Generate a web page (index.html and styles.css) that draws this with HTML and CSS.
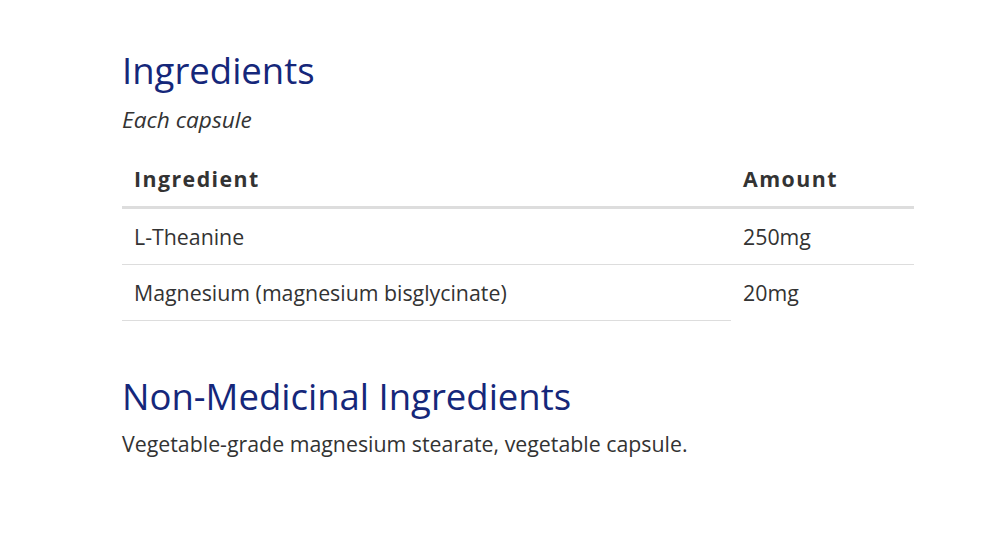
FILE: index.html
```html
<!DOCTYPE html>
<html lang="en">
<head>
  <meta charset="UTF-8" />
  <title>Ingredients</title>
  <link rel="stylesheet" href="styles.css">
</head>
<body>
  <div class="content">

    <!-- Ingredients -->
    <h2>Ingredients</h2>
    <p class="note">Each capsule</p>
    <table class="ingredients">
      <thead>
        <tr>
          <th>Ingredient</th>
          <th class="amount">Amount</th>
        </tr>
      </thead>
      <tbody>
        <tr>
          <td>L-Theanine</td>
          <td class="amount">250mg</td>
        </tr>
        <tr class="last">
          <td>Magnesium (magnesium bisglycinate)</td>
          <td class="amount">20mg</td>
        </tr>
      </tbody>
    </table>

    <!-- Non-medicinal -->
    <h2>Non-Medicinal Ingredients</h2>
    <p class="text">Vegetable-grade magnesium stearate, vegetable capsule.</p>

  </div>
</body>
</html>
```

FILE: styles.css
```css
* {
  box-sizing: border-box;
  margin: 0;
  padding: 0;
  font-family: 'Open Sans', sans-serif;
}

body {
  background: #fff;
  color: #333;
}

.content {
  width: 792px;
  margin-left: 122px;
  padding-top: 46px;
}

h2 {
  font-size: 36.5px;
  font-weight: 400;
  color: #15277a;
  line-height: 48px;
}

.note {
  font-style: italic;
  font-size: 22.67px;
  line-height: 30px;
  margin-top: 11px;
}

.ingredients {
  width: 100%;
  border-collapse: collapse;
  margin-top: 16px;
  margin-bottom: 51px;
}

th {
  text-align: left;
  font-size: 21.33px;
  font-weight: 700;
  line-height: 28px;
  letter-spacing: 1.45px;
  padding: 14px 12px 13px;
  border-bottom: 3px solid #ddd;
}

td {
  font-size: 21.33px;
  line-height: 28px;
  padding: 14px 12px 13px;
  border-bottom: 1px solid #ddd;
}

.amount {
  width: 183px;
}

.last td.amount {
  border-bottom: none;
}

.text {
  font-size: 21.33px;
  line-height: 28px;
  margin-top: 10px;
}
```
